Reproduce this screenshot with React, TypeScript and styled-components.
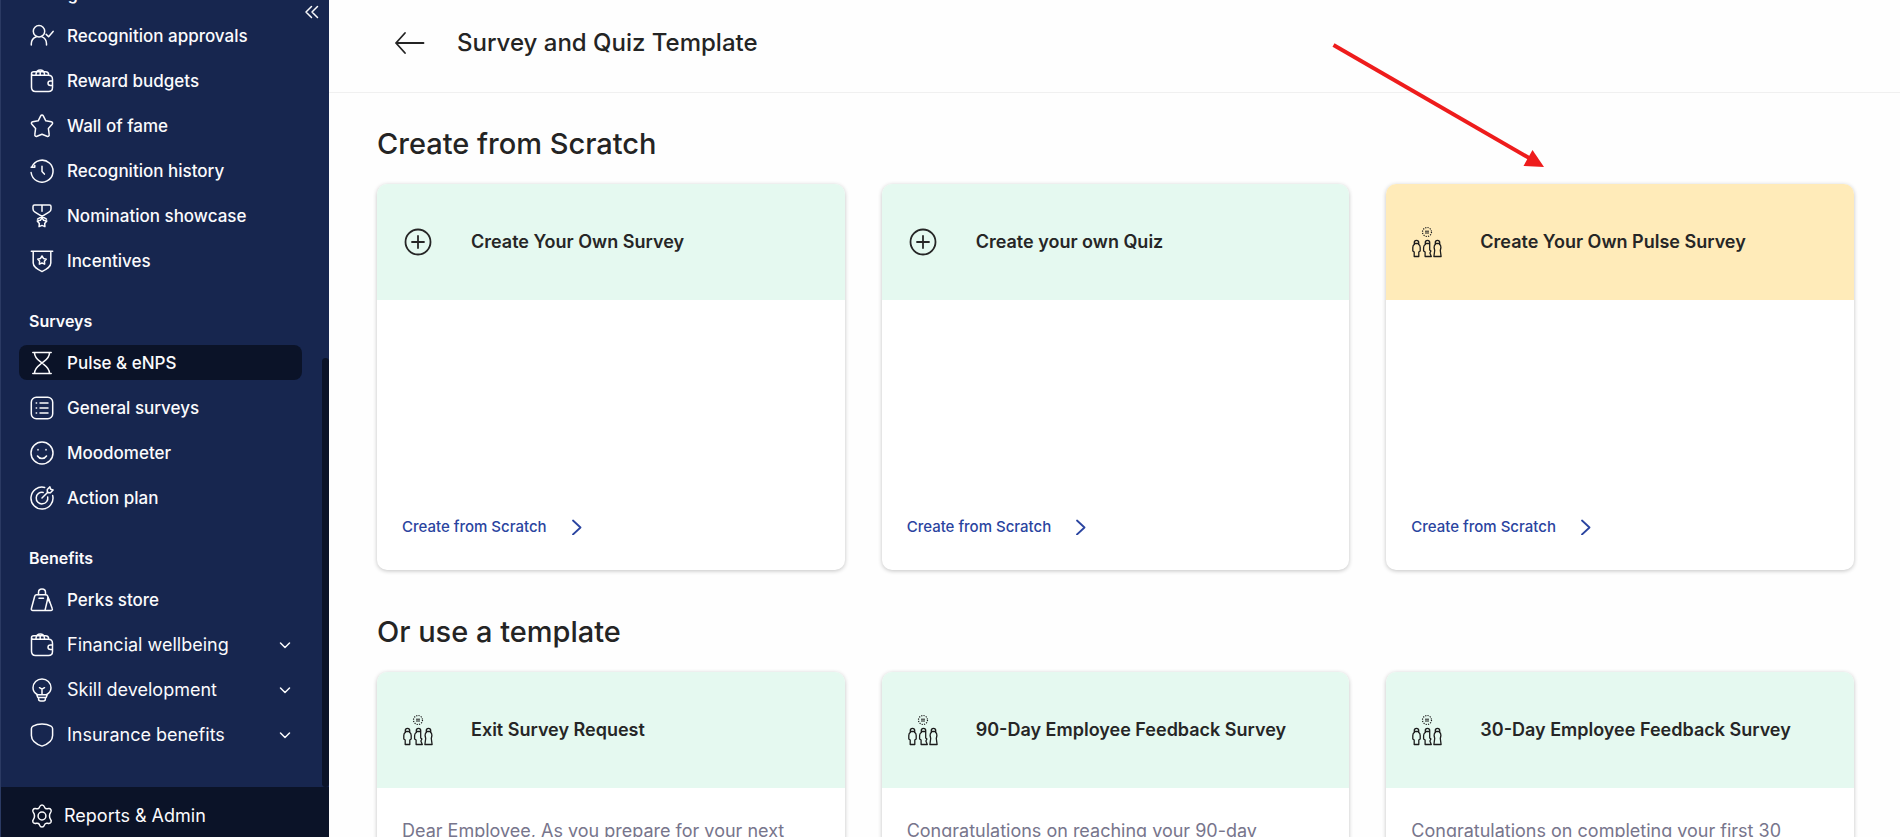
import React from 'react';
import styled, { createGlobalStyle, css } from 'styled-components';

const GlobalStyle = createGlobalStyle`
  *, *::before, *::after { box-sizing: border-box; }
  body { margin: 0; background: #fefefe; font-family: Inter, 'Liberation Sans', sans-serif; }
  h1, h2, h3, p, ul { margin: 0; padding: 0; }
  button { font: inherit; color: inherit; background: none; border: 0; padding: 0; cursor: pointer; }
`;

const Shell = styled.div`
  position: relative;
  display: flex;
  height: 100vh;
  overflow: hidden;
`;

const Sidebar = styled.aside`
  position: relative;
  display: flex;
  flex-direction: column;
  flex: 0 0 329px;
  background: #17264f;
  border-left: 1px solid #2b3a63;
  color: #fbfbfd;
`;

const Nav = styled.nav`
  flex: 1;
  min-height: 0;
  display: flex;
  flex-direction: column;
  justify-content: flex-end;
  gap: 31px;
  overflow: hidden;
  padding: 0 27px 35px 18px;
`;

const NavGroup = styled.section`
  flex: none;
`;

const NavHeading = styled.h2`
  padding-left: 10px;
  margin-bottom: 12px;
  font-size: 16px;
  font-weight: 600;
  line-height: 24px;
`;

const NavList = styled.ul`
  display: flex;
  flex-direction: column;
  gap: 10px;
  list-style: none;
`;

const navRow = css`
  display: flex;
  align-items: center;
  gap: 13px;
  width: 100%;
  height: 35px;
  padding: 0 11px;
  border-radius: 8px;
  line-height: 24px;
  white-space: nowrap;
`;

const NavLink = styled.a<{ $active?: boolean }>`
  ${navRow}
  background: ${p => (p.$active ? '#0b1328' : 'transparent')};
  color: inherit;
  font-size: 17px;
  font-weight: 500;
  text-decoration: none;
`;

const NavToggle = styled.button`
  && {
    ${navRow}
    font-size: 18px;
    text-align: left;
  }
`;

const NavLabel = styled.span`
  flex: 1;
`;

const Collapse = styled.button`
  position: absolute;
  top: 4px;
  right: 9px;
  display: flex;
`;

const ScrollThumb = styled.div`
  position: absolute;
  top: 358px;
  right: 0;
  bottom: 50px;
  width: 7px;
  border-radius: 4px;
  background: #0b1328;
`;

const SidebarFooter = styled.a`
  display: flex;
  align-items: center;
  gap: 10px;
  padding: 17px 29px 9px;
  background: #0b1328;
  color: inherit;
  font-size: 18px;
  line-height: 24px;
  text-decoration: none;
`;

const Main = styled.main`
  flex: 1;
  min-width: 0;
  overflow-y: auto;
  scrollbar-width: none;
`;

const TopBar = styled.header`
  display: flex;
  align-items: center;
  gap: 32px;
  padding: 27px 64px 33px;
  border-bottom: 1px solid #f0f0f0;
`;

const BackButton = styled.button`
  display: flex;
`;

const PageTitle = styled.h1`
  color: #242424;
  font-size: 24px;
  font-weight: 500;
  line-height: 32px;
`;

const Section = styled.section`
  padding: 31px 46px 0 48px;

  & + & { padding-top: 42px; }
`;

const SectionTitle = styled.h2`
  margin-bottom: 21px;
  color: #242424;
  font-size: 29px;
  font-weight: 500;
  line-height: 39px;
`;

const CardGrid = styled.div`
  display: grid;
  grid-template-columns: repeat(3, 1fr);
  gap: 37px;
`;

const Card = styled.article`
  display: flex;
  flex-direction: column;
  min-height: 386px;
  overflow: hidden;
  border-radius: 10px;
  background: #fff;
  box-shadow: 0 1px 4px rgba(0, 0, 0, 0.24);
`;

const CardHead = styled.header<{ $tone: 'mint' | 'amber' }>`
  display: flex;
  align-items: center;
  gap: 37px;
  height: 116px;
  padding: 0 25px;
  background: ${p => (p.$tone === 'amber' ? '#ffebb9' : '#e5f9f0')};
`;

const CardTitle = styled.h3`
  color: #262626;
  font-size: 18px;
  font-weight: 600;
  line-height: 24px;
`;

const CardBody = styled.div`
  display: flex;
  flex: 1;
  flex-direction: column;
  padding: 31px 25px;
`;

const CardText = styled.p`
  color: #77758c;
  font-size: 18px;
  line-height: 24px;
`;

const CardLink = styled.a`
  display: flex;
  align-items: center;
  gap: 22px;
  margin-top: auto;
  color: #2a44a0;
  font-size: 15px;
  font-weight: 500;
  line-height: 24px;
  text-decoration: none;
`;

const Pointer = styled.svg`
  position: absolute;
  top: 40px;
  right: 350px;
  pointer-events: none;
`;

const LineIcon = styled.svg`
  flex: none;
  fill: none;
  stroke: currentColor;
  stroke-width: 1.5;
  stroke-linecap: round;
  stroke-linejoin: round;
`;

const starPath = (cx: number, cy: number, r: number) => {
  const pts = Array.from({ length: 10 }, (_, i) => {
    const a = -Math.PI / 2 + (i * Math.PI) / 5;
    const d = i % 2 ? r * 0.56 : r;
    return `${(cx + d * Math.cos(a)).toFixed(2)} ${(cy + d * Math.sin(a)).toFixed(2)}`;
  });
  return `M${pts.join('L')}Z`;
};

const icons: Record<string, React.ReactNode> = {
  approvals: (
    <>
      <circle cx="9" cy="7.2" r="5.7" />
      <path d="M1.3 21v-1.2c0-3.4 2.200-6 5-7.100M11.700 12.600c2.900 1.100 4.800 3.700 4.800 7.200V21M16.200 10.400l2.400 2.400 4.500-5.400" />
    </>
  ),
  wallet: (
    <>
      <path d="M1.500 4.800v13.400c0 2.600 1.400 4.200 4 4.200h13c2.600 0 4-1.500 4-4v-8c0-2.600-1.400-4.200-4-4.200H3.200c-1.100 0-1.700-.6-1.700-1.500 0-1.200.9-2 2.200-2h11.800c2.100 0 3.200 1.200 3.200 3.400" />
      <path d="M6 6c0-2.600 1-4.400 2.600-4.800M14.500 6c0-2.600-1-4.400-2.600-4.800M7.500 1.900c1.200-1.100 4.300-1.100 5.500 0M10.200 6V2.500M22.400 12h-2c-1.500 0-2.400.9-2.400 2.200s.9 2.200 2.400 2.200h2" />
    </>
  ),
  star: (
    <path d="M10.700 1.900c.6-1.100 2-1.100 2.600 0l2.500 4.900 5.500.9c1.300.2 1.700 1.700.8 2.600l-3.700 4.200.8 6.200c.2 1.300-1 2.100-2.200 1.600L12 20.200l-5 2.100c-1.200.5-2.400-.3-2.200-1.600l.8-6.200-3.700-4.200c-.9-.9-.5-2.400.8-2.600l5.500-.9z" />
  ),
  history: (
    <>
      <path d="M1.800 8.100A11 11 0 1 1 1.100 13.500M1.100 8.200h3.700V6.500" />
      <path d="M12 7.300v5.200l2.400 2.600" />
    </>
  ),
  medal: (
    <>
      <path d="M4.500 1h15c1 0 1.500.6 1.500 1.600v2.300c0 1.500-.8 2.500-2 3.200L7.500 15.200M19.500 1h-15C3.500 1 3 1.600 3 2.600v2.300c0 1.500.8 2.500 2 3.200l11.500 7.100M12 1.200v6" />
      <path d={starPath(12, 18.600, 5)} />
    </>
  ),
  incentives: (
    <>
      <path d="M1.300 2.300h21.400M3.200 2.500v11.400c0 4.200 4.600 6.500 8.800 8.700 4.200-2.200 8.800-4.500 8.800-8.700V2.500" />
      <path d={starPath(12, 11.500, 4.500)} />
    </>
  ),
  hourglass: (
    <path d="M2.800 1.500h18.400M2.800 22.500h18.400M4.500 1.700c0 5.600 4 7.500 7.500 10.300 3.500 2.800 7.500 4.700 7.500 10.300M19.500 1.700c0 5.600-4 7.500-7.500 10.300-3.500 2.800-7.500 4.700-7.500 10.300" />
  ),
  list: (
    <>
      <rect x="1.300" y="1.300" width="21.400" height="21.400" rx="5" />
      <path d="M6.200 7.100h.4M6.200 12h.4M6.200 16.900h.4M10 7.100h8M10 12h8M10 16.900h8" />
    </>
  ),
  smile: (
    <>
      <circle cx="12" cy="12" r="11" />
      <path d="M8 8.600v.4M16 8.600v.4M7.500 15c2 3.200 7 3.200 9 0" />
    </>
  ),
  target: (
    <>
      <path d="M14.700 1.400A11 11 0 1 0 22.700 9.600" />
      <path d="M13.200 6.400a5.800 5.800 0 1 0 4.500 4.500" />
      <path d="M12 12l6-6M17.300 6.800V3.500l2.600-2.600.8 2.300 2.400.8-2.600 2.700z" />
    </>
  ),
  bag: (
    <>
      <path d="M6.500 6.700h9.200c1.100 0 1.700.6 2 1.600l4.500 12.200c.5 1.200-.1 2-1.300 2H2.800c-1.200 0-1.700-.8-1.400-2L4.700 8.300c.3-1 .8-1.600 1.800-1.600z" />
      <path d="M8.500 6.500V4.400C8.500 2.400 9.800 1.100 12 1.100s3.500 1.300 3.500 3.300v2.100M9 10.300h4.500M18 9.500L15 22.300M18 9.500l1.500 4.500" />
    </>
  ),
  bulb: (
    <>
      <path d="M7.600 16.700C4.800 15.200 3 12.700 3 9.700a9 8.800 0 0 1 18 0c0 3-1.800 5.500-4.600 7" />
      <path d="M6.800 16.700h10.400l-1 2.700H7.800zM8.600 19.600v1.400c0 1.200.9 2 2.100 2h2.600c1.200 0 2.100-.8 2.100-2v-1.400M12 16.500v-5.300M9.500 9.700l2.500 1.500 2.500-1.500" />
    </>
  ),
  shield: (
    <path d="M12 1.100c3.200 0 6.500.7 9 2 1.100.6 1.600 1.500 1.600 2.700v6.600c0 5-5 8.700-10.600 10.700C6.400 21.100 1.400 17.400 1.400 12.400V5.800c0-1.200.5-2.100 1.600-2.700 2.500-1.300 5.800-2 9-2z" />
  ),
  gear: (
    <>
      <circle cx="12" cy="12" r="3.900" />
      <path d="M9.600 2.900C10 1.600 10.800.9 12 .9s2 .7 2.400 2c.4 1.400 1.800 2.200 3.200 1.800 1.400-.4 2.600-.2 3.300.9.700 1.200.5 2.200-.4 3.200-1 1.100-1 2.100-1 3.200s0 2.100 1 3.200c.9 1 1.100 2 .4 3.200-.7 1.100-1.900 1.300-3.300.9-1.400-.4-2.800.4-3.200 1.800-.4 1.300-1.200 2-2.400 2s-2-.7-2.400-2c-.4-1.400-1.800-2.200-3.200-1.800-1.400.4-2.600.2-3.300-.9-.7-1.200-.5-2.200.4-3.200 1-1.100 1-2.100 1-3.200s0-2.100-1-3.200c-.9-1-1.100-2-.4-3.200.7-1.100 1.900-1.300 3.300-.9 1.400.4 2.800-.4 3.200-1.800z" />
    </>
  ),
};

const NavIcon = ({ name }: { name: string }) => (
  <LineIcon width="24" height="24" viewBox="0 0 24 24" aria-hidden="true">
    {icons[name]}
  </LineIcon>
);

const Caret = () => (
  <LineIcon width="12" height="8" viewBox="0 0 12 8" aria-hidden="true">
    <path d="M1.500 2l4.500 4.500L10.500 2" />
  </LineIcon>
);

const PlusCircle = () => (
  <LineIcon width="32" height="32" viewBox="0 0 32 32" aria-hidden="true" color="#262626">
    <circle cx="16" cy="16" r="12.500" strokeWidth="1.800" />
    <path d="M16 10v12M10 16h12" strokeWidth="1.800" />
  </LineIcon>
);

const People = () => (
  <LineIcon width="32" height="32" viewBox="0 0 32 32" aria-hidden="true" color="#1c1c1c">
    <circle cx="16" cy="6" r="4.500" strokeDasharray="1.200 1.150" strokeLinecap="butt" strokeWidth="1.200" />
    <path d="M14 5.200h4M14 7h4" strokeWidth="1" strokeLinecap="butt" />
    {[5.500, 16.500, 26.500].map((x, i) => (
      <g key={x} transform={`translate(${x} 0)`} strokeWidth="1.300" strokeLinecap="butt">
        <path d="M-2.200 19v-2.500a2.200 2.200 0 0 1 4.400 0V19M-2.200 17.500h4.400" />
        {i === 0 && <path d="M-2.200 18.500c-1 .5-1.500 1.500-1.500 3v3.500l1.400 1v4.500h4.600V26l1.400-1v-3.500c0-1.500-.5-2.500-1.500-3" />}
        {i === 1 && <path d="M-2.200 18.500c-1 .5-1.700 1.500-1.700 3v3.500l1.500 1v4.500h6.200l-1.400-3.500 1-2-1.200-1v-5" />}
        {i === 2 && <path d="M-2.200 18.500c-.8.500-1.200 1.500-1.200 3l.6 3-.8 6h7.200l-.8-6 .6-3c0-1.500-.4-2.500-1.200-3" />}
      </g>
    ))}
  </LineIcon>
);

type Item = { label: string; icon: string; active?: boolean; nested?: boolean };

const groups: { title: string; items: Item[] }[] = [
  {
    title: 'Recognition',
    items: [
      { label: 'Recognition approvals', icon: 'approvals' },
      { label: 'Reward budgets', icon: 'wallet' },
      { label: 'Wall of fame', icon: 'star' },
      { label: 'Recognition history', icon: 'history' },
      { label: 'Nomination showcase', icon: 'medal' },
      { label: 'Incentives', icon: 'incentives' },
    ],
  },
  {
    title: 'Surveys',
    items: [
      { label: 'Pulse & eNPS', icon: 'hourglass', active: true },
      { label: 'General surveys', icon: 'list' },
      { label: 'Moodometer', icon: 'smile' },
      { label: 'Action plan', icon: 'target' },
    ],
  },
  {
    title: 'Benefits',
    items: [
      { label: 'Perks store', icon: 'bag' },
      { label: 'Financial wellbeing', icon: 'wallet', nested: true },
      { label: 'Skill development', icon: 'bulb', nested: true },
      { label: 'Insurance benefits', icon: 'shield', nested: true },
    ],
  },
];

const scratchCards = [
  { title: 'Create Your Own Survey', tone: 'mint' as const, icon: <PlusCircle /> },
  { title: 'Create your own Quiz', tone: 'mint' as const, icon: <PlusCircle /> },
  { title: 'Create Your Own Pulse Survey', tone: 'amber' as const, icon: <People /> },
];

const templates = [
  { title: 'Exit Survey Request', text: 'Dear Employee, As you prepare for your next' },
  { title: '90-Day Employee Feedback Survey', text: 'Congratulations on reaching your 90-day' },
  { title: '30-Day Employee Feedback Survey', text: 'Congratulations on completing your first 30' },
];

export default function App() {
  return (
    <Shell>
      <GlobalStyle />
      <Sidebar>
        <Nav aria-label="Main">
          {groups.map(group => (
            <NavGroup key={group.title}>
              <NavHeading>{group.title}</NavHeading>
              <NavList>
                {group.items.map(item => (
                  <li key={item.label}>
                    {item.nested ? (
                      <NavToggle aria-expanded={false}>
                        <NavIcon name={item.icon} />
                        <NavLabel>{item.label}</NavLabel>
                        <Caret />
                      </NavToggle>
                    ) : (
                      <NavLink href="#" $active={item.active} aria-current={item.active ? 'page' : undefined}>
                        <NavIcon name={item.icon} />
                        <NavLabel>{item.label}</NavLabel>
                      </NavLink>
                    )}
                  </li>
                ))}
              </NavList>
            </NavGroup>
          ))}
        </Nav>
        <SidebarFooter href="#">
          <NavIcon name="gear" />
          Reports &amp; Admin
        </SidebarFooter>
        <Collapse aria-label="Collapse menu">
          <LineIcon width="16" height="16" viewBox="0 0 16 16" aria-hidden="true">
            <path d="M7.500 2.500L2 8l5.500 5.500M13.500 2.500L8 8l5.500 5.500" />
          </LineIcon>
        </Collapse>
        <ScrollThumb />
      </Sidebar>

      <Main>
        <TopBar>
          <BackButton aria-label="Back">
            <LineIcon width="32" height="24" viewBox="0 0 32 24" aria-hidden="true" color="#242424">
              <path d="M30.500 12H3M12 2L3 12l9 10" strokeWidth="1.800" />
            </LineIcon>
          </BackButton>
          <PageTitle>Survey and Quiz Template</PageTitle>
        </TopBar>

        <Section>
          <SectionTitle>Create from Scratch</SectionTitle>
          <CardGrid>
            {scratchCards.map(card => (
              <Card key={card.title}>
                <CardHead $tone={card.tone}>
                  {card.icon}
                  <CardTitle>{card.title}</CardTitle>
                </CardHead>
                <CardBody>
                  <CardLink href="#">
                    Create from Scratch
                    <LineIcon width="16" height="16" viewBox="0 0 16 16" aria-hidden="true">
                      <path d="M4 1.500L11.500 8.500 4 15.500" strokeWidth="1.800" />
                    </LineIcon>
                  </CardLink>
                </CardBody>
              </Card>
            ))}
          </CardGrid>
        </Section>

        <Section>
          <SectionTitle>Or use a template</SectionTitle>
          <CardGrid>
            {templates.map(card => (
              <Card key={card.title}>
                <CardHead $tone="mint">
                  <People />
                  <CardTitle>{card.title}</CardTitle>
                </CardHead>
                <CardBody>
                  <CardText>{card.text}</CardText>
                </CardBody>
              </Card>
            ))}
          </CardGrid>
        </Section>
      </Main>

      <Pointer width="220" height="136" viewBox="0 0 220 136" aria-hidden="true">
        <path d="M3.500 5L200 118.500" stroke="#ee1c1c" strokeWidth="4" />
        <path d="M214 127L202.500 110 193.500 126z" fill="#ee1c1c" />
      </Pointer>
    </Shell>
  );
}
